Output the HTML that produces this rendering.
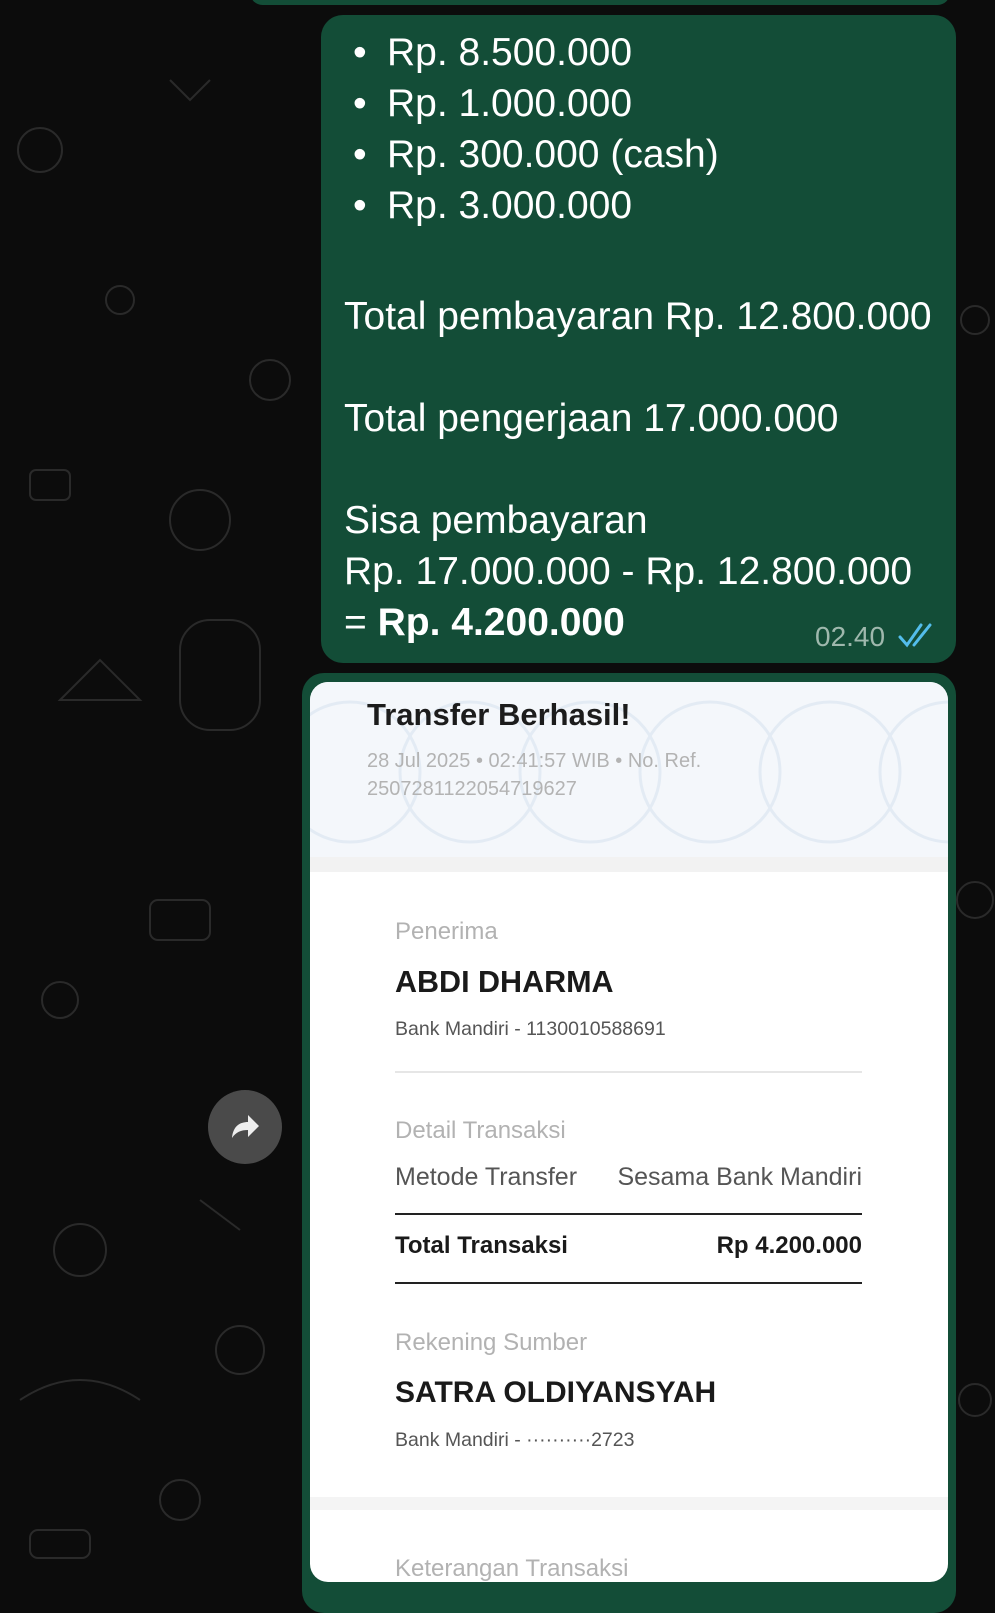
<!DOCTYPE html>
<html><head><meta charset="utf-8"><style>
*{margin:0;padding:0;box-sizing:border-box}
body{width:995px;height:1600px;overflow:hidden;background:#0c0c0c;font-family:"Liberation Sans",sans-serif;position:relative}
.t{position:absolute;white-space:nowrap;line-height:1}
.w{color:#fff;font-size:39px}
.g{color:#b2b2b2;font-size:24px}
.d{color:#555;font-size:19.5px}
.b{color:#1a1a1a;font-weight:bold}
.ln{position:absolute;left:395px;width:467px}
</style></head><body>
<svg style="position:absolute;left:0;top:0" width="995" height="1600" fill="none" stroke="#2a2a2a" stroke-width="2">
<circle cx="40" cy="150" r="22"/><circle cx="120" cy="300" r="14"/><rect x="30" y="470" width="40" height="30" rx="6"/><circle cx="200" cy="520" r="30"/><path d="M60 700 l40 -40 l40 40z"/><circle cx="60" cy="1000" r="18"/><rect x="150" y="900" width="60" height="40" rx="8"/><circle cx="80" cy="1250" r="26"/><path d="M20 1400 q60 -40 120 0"/><circle cx="180" cy="1500" r="20"/><rect x="30" y="1530" width="60" height="28" rx="8"/><circle cx="975" cy="320" r="14"/><circle cx="975" cy="900" r="18"/><circle cx="975" cy="1400" r="16"/><path d="M170 80 l20 20 l20 -20"/><circle cx="270" cy="380" r="20"/><path d="M200 1200 l40 30"/><rect x="180" y="620" width="80" height="110" rx="30"/><circle cx="240" cy="1350" r="24"/>
</svg>
<div style="position:absolute;left:250px;top:-20px;width:700px;height:25px;background:#134d37;border-radius:18px"></div>
<div style="position:absolute;left:321px;top:15px;width:635px;height:648px;background:#134d37;border-radius:22px"></div>
<div class="t w" style="left:353px;top:33px">•</div><div class="t w" style="left:387px;top:33px">Rp. 8.500.000</div>
<div class="t w" style="left:353px;top:84px">•</div><div class="t w" style="left:387px;top:84px">Rp. 1.000.000</div>
<div class="t w" style="left:353px;top:135px">•</div><div class="t w" style="left:387px;top:135px">Rp. 300.000 (cash)</div>
<div class="t w" style="left:353px;top:186px">•</div><div class="t w" style="left:387px;top:186px">Rp. 3.000.000</div>
<div class="t w" style="left:344px;top:297px">Total pembayaran Rp. 12.800.000</div>
<div class="t w" style="left:344px;top:399px">Total pengerjaan 17.000.000</div>
<div class="t w" style="left:344px;top:501px">Sisa pembayaran</div>
<div class="t w" style="left:344px;top:552px">Rp. 17.000.000 - Rp. 12.800.000</div>
<div class="t w" style="left:344px;top:603px">= <b>Rp. 4.200.000</b></div>
<div class="t" style="left:815px;top:623px;font-size:28px;color:#9fb8ad">02.40</div>
<svg style="position:absolute;left:898px;top:623px" width="36" height="26" fill="none" stroke="#53bdeb" stroke-width="3" stroke-linecap="round"><path d="M2 14 l7 8 l14 -20"/><path d="M16 22 l16 -20"/></svg>
<div style="position:absolute;left:302px;top:673px;width:654px;height:940px;background:#134d37;border-radius:22px"></div>
<div style="position:absolute;left:310px;top:682px;width:638px;height:900px;background:#fff;border-radius:18px;overflow:hidden">
<div style="position:absolute;left:0;top:0;width:638px;height:175px;background:#f4f7fb"></div>
<svg style="position:absolute;left:0;top:0" width="638" height="175" fill="none" stroke="#e3ebf4" stroke-width="3"><circle cx="40" cy="90" r="70"/><circle cx="160" cy="90" r="70"/><circle cx="280" cy="90" r="70"/><circle cx="400" cy="90" r="70"/><circle cx="520" cy="90" r="70"/><circle cx="640" cy="90" r="70"/></svg>
<div style="position:absolute;left:0;top:175px;width:638px;height:15px;background:#f2f2f2"></div>
<div style="position:absolute;left:0;top:815px;width:638px;height:13px;background:#f4f4f4"></div>
</div>
<div class="t b" style="left:367px;top:699px;font-size:31px;color:#1c1c1c">Transfer Berhasil!</div>
<div class="t" style="left:367px;top:751px;font-size:20px;color:#b3b3b3">28 Jul 2025 • 02:41:57 WIB • No. Ref.</div>
<div class="t" style="left:367px;top:779px;font-size:20px;color:#b3b3b3">2507281122054719627</div>
<div class="t g" style="left:395px;top:920px">Penerima</div>
<div class="t b" style="left:395px;top:967px;font-size:30.5px">ABDI DHARMA</div>
<div class="t d" style="left:395px;top:1020px">Bank Mandiri - 1130010588691</div>
<div class="ln" style="top:1071px;height:2px;background:#e6e6e6"></div>
<div class="t g" style="left:395px;top:1119px">Detail Transaksi</div>
<div class="t" style="left:395px;top:1165px;font-size:25px;color:#555">Metode Transfer</div>
<div class="t" style="right:133px;top:1165px;font-size:25px;color:#555">Sesama Bank Mandiri</div>
<div class="ln" style="top:1213px;height:2px;background:#222"></div>
<div class="t b" style="left:395px;top:1234px;font-size:24px">Total Transaksi</div>
<div class="t b" style="right:133px;top:1234px;font-size:24px">Rp 4.200.000</div>
<div class="ln" style="top:1282px;height:2px;background:#222"></div>
<div class="t g" style="left:395px;top:1331px">Rekening Sumber</div>
<div class="t b" style="left:395px;top:1378px;font-size:30px">SATRA OLDIYANSYAH</div>
<div class="t d" style="left:395px;top:1431px">Bank Mandiri - ··········2723</div>
<div class="t g" style="left:395px;top:1557px">Keterangan Transaksi</div>
<div style="position:absolute;left:208px;top:1090px;width:74px;height:74px;border-radius:50%;background:#4a4a4a"></div>
<svg style="position:absolute;left:226px;top:1108px" width="38" height="38" viewBox="0 0 38 38"><path d="M6 30 C7 18 14 14 22 14 L22 7 L33 18 L22 29 L22 22 C15 22 10 24 6 30Z" fill="#eee"/></svg>
</body></html>
